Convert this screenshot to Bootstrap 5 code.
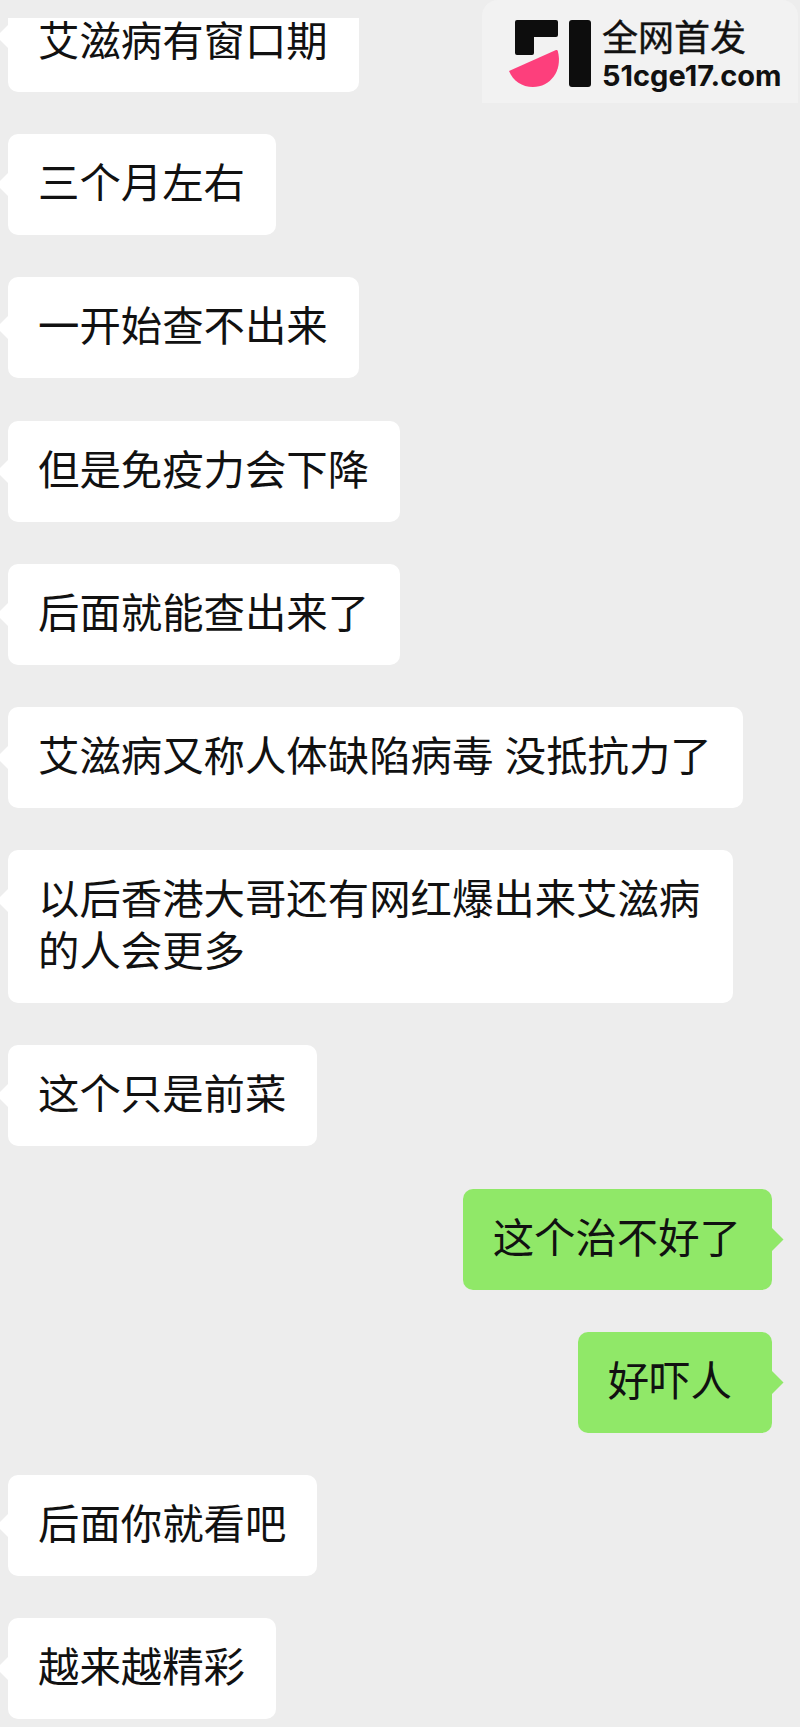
<!DOCTYPE html>
<html lang="zh">
<head>
  <meta charset="UTF-8">
  <meta name="viewport" content="width=device-width, initial-scale=1.0">
  <title>聊天记录</title>
  <link href="https://cdn.jsdelivr.net/npm/bootstrap@5.3.0/dist/css/bootstrap.min.css" rel="stylesheet">
  <style>
    body {
      background: #ededed;
      font-family: "Liberation Sans", "Noto Sans CJK SC", sans-serif;
      color: #111;
      overflow: hidden;
    }
    .chat-list {
      gap: 42.2px;
      padding: 18px 8px 0 8px;
    }
    .bubble {
      position: relative;
      font-size: 41.4px;
      line-height: 52px;
      padding: 24px 31px 25px 30px;
      border-radius: 10px;
      background: #fff;
    }
    .bubble::before {
      content: "";
      position: absolute;
      top: 42px;
      left: -8px;
      width: 17px;
      height: 17px;
      background: inherit;
      transform: rotate(45deg);
    }
    .bubble.cut {
      padding-top: 0;
      padding-bottom: 26px;
      line-height: 48px;
      border-radius: 0 0 10px 10px;
    }
    .bubble.cut::before { top: 10px; }
    .bubble.me {
      background: #90e868;
      margin-right: 20px;
    }
    .bubble.me::before { left: auto; right: -8px; }
    .bubble.short { padding-right: 40px; }
    .bubble.wide { width: 725px; padding-right: 30px; }
    .logo-panel {
      position: absolute;
      top: 0;
      right: 2px;
      width: 316px;
      height: 103px;
      background: #f2f2f2;
      border-radius: 16px 16px 0 0;
    }
    .logo-mark { margin-left: 18px; }
    .logo-text { margin-left: 2px; padding-top: 7px; }
    .logo-cn { font-size: 36px; line-height: 42px; color: #111; -webkit-text-stroke: 0.4px #111; }
    .logo-en { font-size: 29px; line-height: 32px; font-weight: 700; color: #111; font-family: Inter, "Liberation Sans", sans-serif; }
  </style>
</head>
<body>

<div class="logo-panel d-flex align-items-center">
  <svg class="logo-mark flex-shrink-0" width="100" height="85" viewBox="0 0 100 85">
    <path fill="#0d0d0d" d="M17 11h39a2 2 0 0 1 2 2v13a2 2 0 0 1-2 2H34v16a2 2 0 0 1-2 2H17a2 2 0 0 1-2-2V13a2 2 0 0 1 2-2z"/>
    <rect fill="#0d0d0d" x="69" y="11" width="22" height="67" rx="3"/>
    <path fill="#fd3f7c" d="M9 62 L56 41 C57 41 57.500 41 57.800 42 C63 62 50 78 33 78 C22 78 13 72 9 62z"/>
  </svg>
  <div class="logo-text">
    <div class="logo-cn">全网首发</div>
    <div class="logo-en">51cge17.com</div>
  </div>
</div>

<div class="chat-list d-flex flex-column align-items-start">
  <div class="bubble cut">艾滋病有窗口期</div>
  <div class="bubble">三个月左右</div>
  <div class="bubble">一开始查不出来</div>
  <div class="bubble">但是免疫力会下降</div>
  <div class="bubble">后面就能查出来了</div>
  <div class="bubble">艾滋病又称人体缺陷病毒 没抵抗力了</div>
  <div class="bubble wide">以后香港大哥还有网红爆出来艾滋病的人会更多</div>
  <div class="bubble">这个只是前菜</div>
  <div class="bubble me align-self-end">这个治不好了</div>
  <div class="bubble me short align-self-end">好吓人</div>
  <div class="bubble">后面你就看吧</div>
  <div class="bubble">越来越精彩</div>
</div>

<script src="https://cdn.jsdelivr.net/npm/bootstrap@5.3.0/dist/js/bootstrap.bundle.min.js"></script>
</body>
</html>
